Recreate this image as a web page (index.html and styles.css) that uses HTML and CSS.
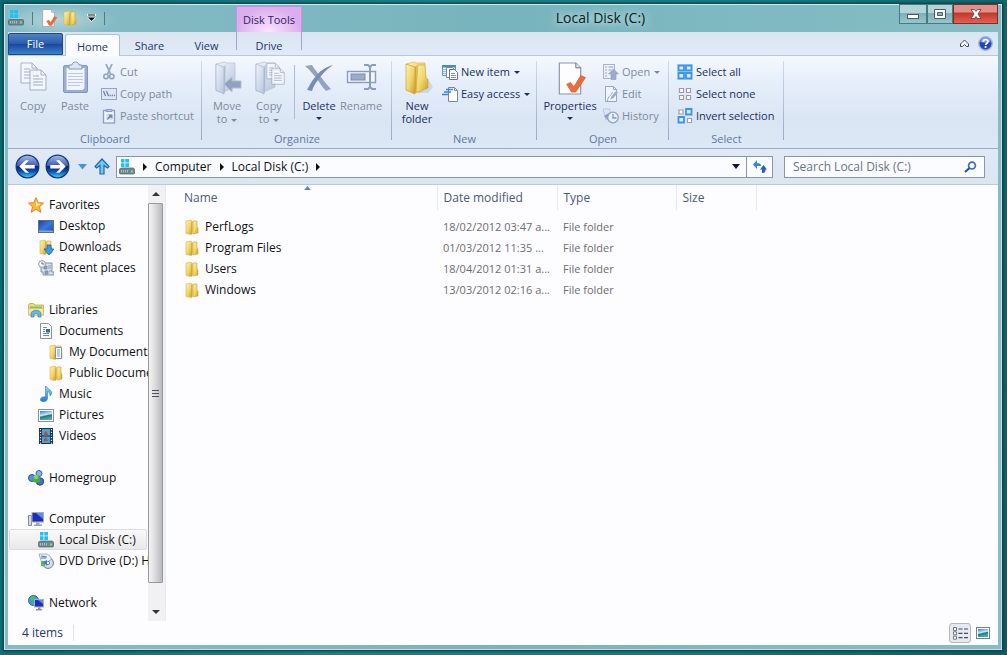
FILE: index.html
```html
<!DOCTYPE html>
<html lang="en">
<head>
<meta charset="utf-8">
<title>Local Disk (C:)</title>
<link rel="stylesheet" href="styles.css">
</head>
<body>
<svg class="defs" aria-hidden="true">
  <defs>
    <linearGradient id="gold" x1="0" y1="0" x2="1" y2="1"><stop offset="0" stop-color="#fdf3b4"/><stop offset=".55" stop-color="#efd467"/><stop offset="1" stop-color="#c99a2c"/></linearGradient>
    <linearGradient id="goldDark" x1="0" y1="0" x2="1" y2="0"><stop offset="0" stop-color="#c89c2e"/><stop offset="1" stop-color="#f4de83"/></linearGradient>
    <linearGradient id="mist" x1="0" y1="0" x2="1" y2="1"><stop offset="0" stop-color="#f3f6fc"/><stop offset="1" stop-color="#a9b7d2"/></linearGradient>
    <linearGradient id="mistDark" x1="0" y1="0" x2="1" y2="0"><stop offset="0" stop-color="#8495b6"/><stop offset="1" stop-color="#ccd6e8"/></linearGradient>
    <linearGradient id="screen" x1="0" y1="0" x2="1" y2="1"><stop offset="0" stop-color="#1c3f9c"/><stop offset=".5" stop-color="#3c78d8"/><stop offset="1" stop-color="#1b46a8"/></linearGradient>
    <linearGradient id="orb" x1="0" y1="0" x2="0" y2="1"><stop offset="0" stop-color="#a9bde6"/><stop offset=".46" stop-color="#3d5fb4"/><stop offset=".5" stop-color="#0c2276"/><stop offset=".72" stop-color="#0f4fb0"/><stop offset="1" stop-color="#35dcff"/></linearGradient>
    <linearGradient id="sky" x1="0" y1="0" x2="0" y2="1"><stop offset="0" stop-color="#8fe0fb"/><stop offset="1" stop-color="#1f78c8"/></linearGradient>
    <linearGradient id="photo" x1="0" y1="0" x2=".3" y2="1"><stop offset="0" stop-color="#2c7fc8"/><stop offset=".5" stop-color="#c4ecf7"/><stop offset=".65" stop-color="#1d7a86"/><stop offset="1" stop-color="#4fae9a"/></linearGradient>
    <symbol id="folder" viewBox="0 0 16 16"><path d="M2 2l5-1 1 1v13l-1 .5-5-1z" fill="url(#gold)" stroke="#d6b450" stroke-width=".6"/><path d="M7.500 3l1.500-1v12l-1.500 1.200z" fill="url(#goldDark)"/><path d="M9 2h4v6l1 1v5l-5 1z" fill="url(#gold)" stroke="#cfa63c" stroke-width=".6"/></symbol>
    <symbol id="disk" viewBox="0 0 16 16"><path d="M2 0h3.500v3.500H2zM6.300 0H10v3.500H6.300zM2 4.300h3.500V8H2zM6.300 4.300H10V8H6.300z" fill="#20c0f4"/><path d="M1 9.500L3 8h11l1.500 1.500z" fill="#b5c6cb"/><rect x=".5" y="9.500" width="15" height="5.500" rx="1" fill="#71868e" stroke="#4d6068" stroke-width=".7"/><path d="M2.500 11v2.500M4.500 11v2.500M6.500 11v2.500M8.500 11v2.500" stroke="#a9bcc2"/><rect x="12" y="11.500" width="2" height="2" fill="#7be46b"/></symbol>
    <symbol id="checkpage" viewBox="0 0 32 34"><path d="M5 1h17l5 5v27H5z" fill="#fdfdff" stroke="#8d94a6" stroke-width="1.200"/><path d="M22 1v5h5" fill="#e2e6ef" stroke="#6c7386"/><path d="M12.500 23l4-2 3.500 4.500L27 14l5 2-10 15h-4.500z" fill="#ea6d3c" stroke="#c8542b" stroke-width=".6"/></symbol>
    <symbol id="movefolder" viewBox="0 0 32 34"><path d="M4 3l9-2 1 1h9v24l-9 4H4z" fill="url(#mist)" stroke="#a0aec9" stroke-width=".7"/><path d="M4 3l8 3v27l-8-4z" fill="url(#mist)" stroke="#8d9dbf" stroke-width=".7"/><path d="M12 6l2-3v25l-2 5z" fill="url(#mistDark)"/></symbol>
    <symbol id="lines" viewBox="0 0 18 22"><path d="M1 1h11l5 5v15H1z" fill="#f8faff" stroke="#8999ba"/><path d="M12 1v5h5" fill="none" stroke="#8999ba"/><path d="M4 7h6M4 10h10M4 13h10M4 16h10" stroke="#8999ba"/></symbol>
  </defs>
</svg>
<main class="window">
  <header class="titlebar">
    <div class="quick">
      <svg class="ic16" viewBox="0 0 16 16"><use href="#disk"/></svg>
      <span class="quick-sep"></span>
      <button class="quick-btn" aria-label="Properties"><svg class="ic18"><use href="#checkpage"/></svg></button>
      <button class="quick-btn" aria-label="New folder"><svg class="ic16"><use href="#folder"/></svg></button>
      <button class="quick-more" aria-label="Customize"><svg width="9" height="8" viewBox="0 0 9 8"><path d="M0 0h9v2H0zM0 3.500h9L4.500 8z" fill="#fff"/><path d="M1 .5h7v1H1zM1 3.500h7l-3.500 3.500z" fill="#111"/></svg></button>
      <span class="quick-sep"></span>
    </div>
    <div class="context">Disk Tools</div>
    <h1 class="title">Local Disk (C:)</h1>
    <div class="controls">
      <button class="ctl min" aria-label="Minimize"><svg width="14" height="12"><rect x="1.500" y="6.500" width="11" height="4" fill="#fff" stroke="#4b5c66"/></svg></button>
      <button class="ctl max" aria-label="Maximize"><svg width="12" height="10"><path d="M.5.5h11v9H.5z" fill="#fff" stroke="#4b5c66"/><path d="M3.500 3.500h5v3h-5z" fill="#8ab8bf" stroke="#4b5c66"/></svg></button>
      <button class="ctl close" aria-label="Close"><svg width="12" height="12" viewBox="0 0 12 12"><path d="M1 1.500h3.500L6 3.500l1.500-2H11L8 6l3 4.500H7.500L6 8.500l-1.500 2H1L4 6z" fill="#fff" stroke="#6a3434" stroke-width=".8"/></svg></button>
    </div>
  </header>

  <nav class="tabs">
    <button class="tab file">File</button>
    <button class="tab home">Home</button>
    <button class="tab">Share</button>
    <button class="tab">View</button>
    <button class="tab drive">Drive</button>
    <span class="grow"></span>
    <button class="plain" aria-label="Collapse the ribbon"><svg width="11" height="9" viewBox="0 0 11 9"><path d="M5.500 1l4 4v2.500h-2l-2-2-2 2h-2V5z" fill="#fff" stroke="#3e4658"/></svg></button>
    <button class="plain" aria-label="Help"><svg width="15" height="15" viewBox="0 0 15 15"><circle cx="7.500" cy="7.500" r="6.700" fill="#2547b4" stroke="#a3b4dd" stroke-width="1.400"/><path d="M2.500 6a5 5 0 0 1 10 0c-3 1-7 1-10 0z" fill="#809ce4"/><path d="M5.200 5.800c0-3 4.800-3 4.800-.4 0 1.900-2.300 1.700-2.300 3.600" fill="none" stroke="#fff" stroke-width="1.700"/><circle cx="7.600" cy="11" r="1.100" fill="#fff"/></svg></button>
  </nav>

  <section class="ribbon">
    <div class="group clipboard">
      <div class="tools">
        <button class="big" disabled><svg class="ic34" viewBox="0 0 34 34"><svg x="4" y="1" width="18" height="22"><use href="#lines"/></svg><svg x="13" y="8" width="18" height="22"><use href="#lines"/></svg></svg>Copy</button>
        <button class="big" disabled><svg class="ic34" viewBox="0 0 34 34"><rect x="5.500" y="4.500" width="24" height="27" rx="1.500" fill="#92a2c6" stroke="#7487b1"/><path d="M8.500 7h18v20l-2 2h-16z" fill="#f3f6fd"/><path d="M10 12.500h15M10 15.500h15M10 18.500h15M10 21.500h15M10 24.500h12" stroke="#b7c2db"/><path d="M11 8V4h3c0-4 7-4 7 0h3v4z" fill="#dbe3f3" stroke="#7487b1"/></svg>Paste</button>
        <div class="stack">
          <button class="small" disabled><svg class="ic16" viewBox="0 0 16 16"><path d="M5 0l4.500 10M11 0L6.500 10" stroke="#8b9bbd" stroke-width="1.800"/><circle cx="5" cy="12.500" r="2.200" fill="none" stroke="#8192b8" stroke-width="1.500"/><circle cx="10.800" cy="12.500" r="2.200" fill="none" stroke="#8192b8" stroke-width="1.500"/></svg>Cut</button>
          <button class="small" disabled><svg class="ic16" viewBox="0 0 16 16"><rect x=".5" y="2.500" width="15" height="11" fill="#dfe7f6" stroke="#8999bd"/><path d="M2.500 5l2 5M5.500 5l2 5" stroke="#576b99" stroke-width="1.200"/><path d="M8.500 9.500h1.200M10.700 9.500h1.200M12.900 9.500h1.200" stroke="#576b99" stroke-width="1.300"/></svg>Copy path</button>
          <button class="small" disabled><svg class="ic16" viewBox="0 0 16 16"><rect x="2.500" y="2.500" width="11" height="12.500" fill="#f2f5fc" stroke="#8192b8" stroke-width="1.300"/><path d="M5 3.500V1.500h6v2z" fill="#b4c0da" stroke="#8192b8"/><path d="M5 6h6v6H5z" fill="#dbe3f3"/><path d="M6 12c0-2 .8-3 2.500-4L7 6.500h4.500V11L10 9.500C8.500 10 7.500 11 6 12z" fill="#6378a8"/></svg>Paste shortcut</button>
        </div>
      </div>
      <h2>Clipboard</h2>
    </div>
    <div class="group organize">
      <div class="tools">
        <button class="big" disabled><svg class="ic34" viewBox="0 0 34 34"><svg x="2" width="32" height="34"><use href="#movefolder"/></svg><path d="M14 23l8-7v4h9v7h-9v4z" fill="#8395b8" stroke="#a9b6d0"/></svg>Move<br>to <i class="caret"></i></button>
        <button class="big" disabled><svg class="ic34" viewBox="0 0 34 34"><svg width="32" height="34"><use href="#movefolder"/></svg><svg x="14" y="1" width="14" height="18"><use href="#lines"/></svg><svg x="19" y="6" width="14" height="19"><use href="#lines"/></svg></svg>Copy<br>to <i class="caret"></i></button>
        <span class="tool-sep"></span>
        <button class="big"><svg class="ic34" viewBox="0 0 34 34"><path d="M3 5l7-1c3 5 6 8 9 12 3 4 7 9 10 12l-5 2c-4-4-6-8-9-12C11 13 8 9 3 5z" fill="#92a2c0"/><path d="M31 4c-6 4-11 9-15 15-3 4-5 7-6 11l-5-1c3-6 6-11 10-15 4-5 9-8 16-10z" fill="#7a8cb0"/></svg>Delete<i class="caret below"></i></button>
        <button class="big" disabled><svg class="ic34" viewBox="0 0 34 34"><rect x="3.500" y="10.500" width="28" height="11" fill="#f2f5fc" stroke="#7b8db4" stroke-width="1.400"/><rect x="7" y="13" width="14" height="6" fill="#8fa0c2" stroke="#6a7da8"/><path d="M20 4h4l2 2 2-2h4M20 28h4l2-2 2 2h4M26 5.500v21" fill="none" stroke="#7b8db4" stroke-width="2"/></svg>Rename</button>
      </div>
      <h2>Organize</h2>
    </div>
    <div class="group new">
      <div class="tools">
        <button class="big"><svg class="ic34" viewBox="0 0 34 34"><path d="M28 18l5 8-5 6H14z" fill="#b9bfcd" opacity=".5"/><path d="M6 3l8-2 2 1h9v24l-8 5z" fill="url(#gold)" stroke="#dbb84e" stroke-width=".7"/><path d="M6 3l9 3v27l-9-4z" fill="url(#gold)" stroke="#caa13a" stroke-width=".7"/><path d="M15 6l3-3v24l-3 6z" fill="url(#goldDark)"/><path d="M18 4h7l1 13 2 1v9l-9 4h-3z" fill="url(#gold)" stroke="#caa13a" stroke-width=".6"/></svg>New<br>folder</button>
        <div class="stack">
          <button class="small"><svg class="ic16" viewBox="0 0 16 16"><path d="M.5 1.500h13v10H.5z" fill="#e8f3fd" stroke="#5b9bd0"/><path d="M0 1h14v2.500H0z" fill="#3f8ed0"/><path d="M2 5v5M4 5v5" stroke="#438acb" stroke-dasharray="1 1"/><path d="M4.500 3.500h6l2 2v8h-8z" fill="#fff" stroke="#7b8799"/><path d="M7.500 5.500h5l3 3v7h-8z" fill="#fff" stroke="#6c798f"/><path d="M9 9.500h4M9 11.500h5M9 13.500h5" stroke="#7e95b8"/></svg>New item <i class="caret"></i></button>
          <button class="small"><svg class="ic16" viewBox="0 0 16 16"><path d="M6.500 1.500h6l3 3v11h-9z" fill="#fff" stroke="#7b8799"/><path d="M12.500 1.500v3h3" fill="none" stroke="#7b8799"/><path d="M4 3.500h7M2 6h7M0 8.500h6" stroke="#3b83cf" stroke-width="1.500"/></svg>Easy access <i class="caret"></i></button>
        </div>
      </div>
      <h2>New</h2>
    </div>
    <div class="group open">
      <div class="tools">
        <button class="big wide"><svg class="ic34" viewBox="0 0 34 34"><use href="#checkpage" width="34" height="33" y="1"/></svg>Properties<i class="caret below"></i></button>
        <div class="stack">
          <button class="small" disabled><svg class="ic16" viewBox="0 0 16 16"><rect x=".5" y=".5" width="11" height="14" fill="#eef2fa" stroke="#9aa9c7"/><path d="M2 3h2M2 6h2M2 9h2M2 12h2M5.500 3h5M5.500 6h3" stroke="#8596ba" stroke-width="1.200"/><path d="M10.500 5l5 5H13v5.500H8V10H5.500z" fill="#8f9fbf" stroke="#7d8fb3" stroke-width=".6"/></svg>Open <i class="caret"></i></button>
          <button class="small" disabled><svg class="ic16" viewBox="0 0 16 16"><path d="M2.500.5h8l3 3v12h-11z" fill="#f5f8fd" stroke="#8a9abc"/><path d="M10.500.5v3h3M4.500 15c0-5 4-5 5-9" fill="none" stroke="#8a9abc"/><path d="M8 11l5-6 2 1.500-5 6-2.500.5z" fill="#8fa0c2"/></svg>Edit</button>
          <button class="small" disabled><svg class="ic16" viewBox="0 0 16 16"><path d="M0 1h7v7l-4 4z" fill="#dde5f2" stroke="#a7b4ce" stroke-width=".7"/><path d="M1 8l5-3v8z" fill="#7e90b6"/><circle cx="10" cy="9.500" r="5.300" fill="#edf2fb" stroke="#8797ba" stroke-width="1.300"/><path d="M10 6v4h3.500" fill="none" stroke="#7286af" stroke-width="1.300"/></svg>History</button>
        </div>
      </div>
      <h2>Open</h2>
    </div>
    <div class="group select">
      <div class="tools">
        <div class="stack">
          <button class="small"><svg class="ic16" viewBox="0 0 16 16"><path d="M0 0h16v16H0z" fill="#cce6fd"/><path d="M1.500 1.500H7v5H1.500zM9 1.500h5.500v5H9zM1.500 9H7v5.500H1.500zM9 9h5.500v5.500H9z" fill="#d3eafd" stroke="#3b95e6" stroke-width="1.800"/></svg>Select all</button>
          <button class="small"><svg class="ic16" viewBox="0 0 16 16"><path d="M2.500 2.500h4v4h-4zM9.500 2.500h4v4h-4zM2.500 9.500h4v4h-4zM9.500 9.500h4v4h-4z" fill="#fff" stroke="#9a9ea8" stroke-width="1.200"/></svg>Select none</button>
          <button class="small"><svg class="ic16" viewBox="0 0 16 16"><path d="M2 2h4v4H2zM10.500 10.500h4v4h-4z" fill="#fff" stroke="#9a9ea8" stroke-width="1.200"/><path d="M9 1h5.500v5.500H9zM1.500 9H7v5.500H1.500z" fill="#d3eafd" stroke="#3b95e6" stroke-width="1.800"/></svg>Invert selection</button>
        </div>
      </div>
      <h2>Select</h2>
    </div>
  </section>

  <section class="navbar">
    <button class="plain" aria-label="Back"><svg class="orb" viewBox="0 0 26 26"><circle cx="13" cy="13" r="11.800" fill="url(#orb)" stroke="#16347e" stroke-width="1.300"/><path d="M4.500 13l6.500-6.500h3.500l-4.500 5h10.500v3.500H10l4.500 4.500H11z" fill="#fff"/></svg></button>
    <button class="plain" aria-label="Forward"><svg class="orb" viewBox="0 0 26 26"><circle cx="13" cy="13" r="11.800" fill="url(#orb)" stroke="#16347e" stroke-width="1.300"/><path d="M21.500 13L15 6.500h-3.500l4.500 5H5.500V15H16l-4.500 4.500H15z" fill="#fff"/></svg></button>
    <button class="plain recent" aria-label="Recent locations"><svg width="9" height="6"><path d="M0 0h9L4.500 5.500z" fill="#4a96c8"/></svg></button>
    <button class="plain" aria-label="Up"><svg width="16" height="17" viewBox="0 0 16 17"><path d="M8 1l7 7.500-1.500 1.500L10 7.500V16H6V7.500L2.500 10 1 8.500z" fill="#69cdf8" stroke="#2a62ac" stroke-width="1.200"/></svg></button>
    <div class="address">
      <svg class="ic16"><use href="#disk"/></svg>
      <i class="arrow"></i><a href="#computer">Computer</a>
      <i class="arrow"></i><a href="#disk-c">Local Disk (C:)</a>
      <i class="arrow"></i>
      <span class="grow"></span>
      <button class="plain drop" aria-label="Previous locations"><svg width="8" height="6"><path d="M0 0h8L4 5z" fill="#14143c"/></svg></button>
      <button class="refresh" aria-label="Refresh"><svg width="14" height="14" viewBox="0 0 14 14"><path d="M0 4.500L4 0v3c3 0 4 1 4 3H4v3z" fill="#3b86cf"/><path d="M14 9.500L10.500 5 7 9.500h2V13c3 0 3.500-1 3.500-3.500z" fill="#2c62b0"/></svg></button>
    </div>
    <div class="search">
      <input type="search" aria-label="Search" placeholder="Search Local Disk (C:)">
      <svg width="13" height="12" viewBox="0 0 13 12"><circle cx="8" cy="4.500" r="3.400" fill="#f4faff" stroke="#3a72bd" stroke-width="1.700"/><path d="M5.500 7L1 11" stroke="#23579f" stroke-width="2.200"/></svg>
    </div>
  </section>

  <section class="content">
    <nav class="tree">
      <ul>
        <li><a href="#fav"><svg class="ic16" viewBox="0 0 16 16"><path d="M8 .7l2.200 5 5.300.4-4 3.700 1.300 5.500L8 12.300l-4.800 3 1.300-5.500-4-3.700 5.300-.4z" fill="#fbb938" stroke="#e2812a"/><path d="M8 3l1.500 3.600 3 .4L8 9.500z" fill="#fff0a0"/></svg>Favorites</a>
          <ul>
            <li><a href="#desk"><svg class="ic16" viewBox="0 0 16 16"><rect x=".5" y="2.500" width="15" height="12" fill="url(#screen)" stroke="#5a6c92"/><path d="M1 12.500h14V14H1z" fill="#8ea6d2"/></svg>Desktop</a></li>
            <li><a href="#down"><svg class="ic16" viewBox="0 0 16 16"><use href="#folder" width="16" height="16"/><path d="M9 6h4v4h3l-5 6-5-6h3z" fill="#36a0ea" stroke="#1c62b0" stroke-width=".8"/></svg>Downloads</a></li>
            <li><a href="#recent"><svg class="ic16" viewBox="0 0 16 16"><path d="M3 3h11v9h2v3H5v-3H3z" fill="#d6dee8" stroke="#8592a4"/><path d="M6 6h3v3H6zM10 6h3M10 8h3M7 11h3v3H7zM11 11h3" fill="#8ca4c4" stroke="#6d83a3" stroke-width=".7"/><circle cx="4" cy="4" r="3.400" fill="#f6f8fb" stroke="#8f98a6"/><path d="M4 2v2h2" fill="none" stroke="#5d6c82"/></svg>Recent places</a></li>
          </ul></li>
        <li><a href="#lib"><svg class="ic16" viewBox="0 0 16 16"><path d="M.5 3l1-1.500h4L7 3h8.500v10H.5z" fill="#f2d978" stroke="#c9a33e" stroke-width=".8"/><path d="M2 4.500h12v2H2z" fill="#7cc26b"/><path d="M.5 6.500h15V13H.5z" fill="#f8e79f" stroke="#d8b955" stroke-width=".6"/><path d="M3 15v-3c0-5 10-5 10 0v3h-3v-2c0-2-4-2-4 0v2z" fill="#62b8ec" stroke="#3683bf" stroke-width=".7"/></svg>Libraries</a>
          <ul>
            <li><a href="#docs"><svg class="ic16" viewBox="0 0 16 16"><path d="M2.500.5h8l3 3v12h-11z" fill="#fcfdff" stroke="#8792a5"/><path d="M5 4.500h4M5 6.500h2M5 8.500h2M5 10.500h6M5 12.500h6" stroke="#7389ad"/><path d="M8 6h4v3.500H8z" fill="#2e66b4"/></svg>Documents</a>
              <ul>
                <li><a href="#mydocs"><svg class="ic16" viewBox="0 0 16 16"><use href="#folder" width="16" height="16"/><path d="M7.500 3.500h6v11h-6z" fill="#fff" stroke="#8090a8"/><path d="M9 6h3M9 8h3M9 10h3M9 12h3" stroke="#7995bd"/></svg>My Documents</a></li>
                <li><a href="#pubdocs"><svg class="ic16"><use href="#folder"/></svg>Public Documents</a></li>
              </ul></li>
            <li><a href="#music"><svg class="ic16" viewBox="0 0 16 16"><path d="M8 0c1 3 6 3.500 5.500 7.500-.3 1.500-1 2-1.500 2.500.3-3-1.200-4-2.500-4.500V12c0 5-8 4.500-7 1 .6-2 3-2.500 5-2V0z" fill="url(#sky)" stroke="#2b7fc2" stroke-width=".6"/></svg>Music</a></li>
            <li><a href="#pics"><svg class="ic16" viewBox="0 0 16 16"><rect x=".5" y="2.500" width="15" height="12" fill="#fff" stroke="#87919c"/><rect x="2" y="4" width="12" height="9" fill="url(#photo)"/></svg>Pictures</a></li>
            <li><a href="#vids"><svg class="ic16" viewBox="0 0 16 16"><path d="M1 0h14v16H1z" fill="#23303e"/><path d="M4 1h8v6.500H4zM4 8.500h8V15H4z" fill="#4aa0dc"/><path d="M6 5l2-2 2 3v1.500H6zM6 11l2-2 2 4H6z" fill="#a4593e"/><path d="M2.500 1v15M13.500 1v15" stroke="#e8edf2" stroke-width="1.200" stroke-dasharray="1.200 1.500"/></svg>Videos</a></li>
          </ul></li>
        <li><a href="#home"><svg class="ic16" viewBox="0 0 16 16"><circle cx="11" cy="3.500" r="3" fill="#82b5ea" stroke="#3d63ae"/><circle cx="4" cy="8" r="3.500" fill="#5790d8" stroke="#2a4f9e"/><circle cx="12" cy="11.500" r="3.700" fill="#4a6fca" stroke="#2a3f94"/><path d="M4 11c2-5 6-7 8-2 1 4-3 5-8 2z" fill="#46aa3c"/><circle cx="8" cy="7" r="2.200" fill="#86d469"/></svg>Homegroup</a></li>
        <li><a href="#computer"><svg class="ic16" viewBox="0 0 16 16"><path d="M.5 4.500h3v10h-3z" fill="#d4d8dd" stroke="#858c96"/><rect x="4" y="1.500" width="11.500" height="9.500" fill="#1c2fba" stroke="#a7afbc"/><path d="M8 2h7v6z" fill="#6687f0"/><path d="M8 11.500h3.500v2H14V15H6v-1.500h2z" fill="#9da5b2"/></svg>Computer</a>
          <ul>
            <li><a class="current" href="#disk-c"><svg class="ic16"><use href="#disk"/></svg>Local Disk (C:)</a></li>
            <li><a href="#disk-d"><svg class="ic16" viewBox="0 0 16 16"><circle cx="10" cy="10" r="5.400" fill="#d4dfef" stroke="#66789b"/><circle cx="10" cy="10" r="1.700" fill="#fff" stroke="#7a8cad"/><path d="M1 1h8l4 3v3L4 11z" fill="#eef2f7" stroke="#8794a8" stroke-width=".7"/><path d="M3 3l6 1M3 5h5" stroke="#4a77be"/><path d="M3 8h4v5H3z" fill="#5bba49"/><path d="M5 9l4-2v6z" fill="#3b7fcb"/></svg>DVD Drive (D:) HRM_</a></li>
          </ul></li>
        <li><a href="#net"><svg class="ic16" viewBox="0 0 16 16"><circle cx="5.500" cy="5.500" r="5" fill="#38a0dc" stroke="#246aa8"/><path d="M2 3c2-2 4-2 5-1L6 5 3 6zM4 7l3 1-2 2z" fill="#54bb55"/><rect x="6.500" y="4.500" width="9" height="7.500" fill="#1c2fba" stroke="#a7afbc"/><path d="M10 5h5v4z" fill="#6687f0"/><path d="M10 12.500h2.500V14H14v1.500H8V14h2z" fill="#8993a5"/></svg>Network</a></li>
      </ul>
    </nav>
    <div class="scroll">
      <button class="scroll-btn" aria-label="Scroll up"><svg width="8" height="5"><path d="M4 0l4 4H0z" fill="#333"/></svg></button>
      <div class="thumb"><i></i><i></i><i></i></div>
      <button class="scroll-btn" aria-label="Scroll down"><svg width="8" height="5"><path d="M4 4l4-4H0z" fill="#333"/></svg></button>
    </div>
    <div class="files">
      <table>
        <thead><tr><th class="c-name">Name<svg class="sort" width="7" height="4"><path d="M3.500 0L7 4H0z" fill="#5c8aae"/></svg></th><th class="c-date">Date modified</th><th class="c-type">Type</th><th class="c-size">Size</th></tr></thead>
        <tbody>
          <tr><td><svg class="ic16"><use href="#folder"/></svg>PerfLogs</td><td>18/02/2012 03:47 a...</td><td>File folder</td><td></td></tr>
          <tr><td><svg class="ic16"><use href="#folder"/></svg>Program Files</td><td>01/03/2012 11:35 ...</td><td>File folder</td><td></td></tr>
          <tr><td><svg class="ic16"><use href="#folder"/></svg>Users</td><td>18/04/2012 01:31 a...</td><td>File folder</td><td></td></tr>
          <tr><td><svg class="ic16"><use href="#folder"/></svg>Windows</td><td>13/03/2012 02:16 a...</td><td>File folder</td><td></td></tr>
        </tbody>
      </table>
    </div>
  </section>

  <footer class="status">
    <span class="count">4 items</span>
    <span class="grow"></span>
    <button class="view on" aria-label="Details"><svg width="15" height="13" viewBox="0 0 15 13"><path d="M.5.5h3v3h-3zM.5 4.800h3v3h-3zM.5 9.200h3v3h-3z" fill="#fff" stroke="#6e7788"/><path d="M5.500 2h4M11 2h4M5.500 6.300h4M11 6.300h4M5.500 10.700h4M11 10.700h4" stroke="#414c66" stroke-width="1.200"/></svg></button>
    <button class="view" aria-label="Large icons"><svg width="14" height="12" viewBox="0 0 14 12"><rect x=".5" y=".5" width="13" height="11" fill="#fff" stroke="#74808e"/><rect x="2" y="2" width="10" height="8" fill="url(#photo)"/></svg></button>
  </footer>
</main>
</body>
</html>
```
FILE: styles.css
```css
* { box-sizing: border-box; }
body {
  margin: 0;
  height: 100vh;
  padding: 3px 4px 4px 3px;
  display: flex;
  background: linear-gradient(100deg, #0d6b73, #1f8189 40%, #177b82 70%, #0c5f66);
  font-family: "Open Sans", "Noto Sans", sans-serif;
  font-size: 12px;
  line-height: 16px;
  color: #111;
}
button { margin: 0; padding: 0; border: 0; background: none; font: inherit; color: inherit; }
ul { list-style: none; margin: 0; padding: 0; }
a { color: inherit; text-decoration: none; }
svg { display: block; flex: none; }
.defs { position: absolute; width: 0; height: 0; }
.ic16 { width: 16px; height: 16px; }
.ic18 { width: 17px; height: 18px; }
.ic34 { width: 34px; height: 34px; }
.grow { flex: 1; }
.plain { display: flex; align-items: center; justify-content: center; }

.window {
  flex: 1;
  min-width: 0;
  display: flex;
  flex-direction: column;
  padding: 0 4px 5px 3px;
  border: 1px solid #17474d;
  box-shadow: inset 1px 1px 0 #d4e9ec, inset -1px -1px 0 #c2dee2, 0 0 3px #053c42;
  background: linear-gradient(90deg, #86bbc6, #78b4bd 50%, #86bdc4);
}

.titlebar { height: 28px; display: flex; flex: none; padding-left: 1px; }
.quick { width: 228px; display: flex; align-items: center; gap: 8px; background: radial-gradient(ellipse 60px 16px at 50px 16px, #b4d4d8, transparent); }
.quick-sep { width: 1px; height: 13px; background: #4f7d87; }
.quick-btn { width: 14px; height: 20px; display: flex; align-items: center; justify-content: center; }
.quick-more { padding-left: 2px; }
.context {
  width: 66px; margin-top: 2px; text-align: center; font-size: 11px; line-height: 26px;
  border: 1px solid #c795df; border-bottom: 0; color: #2a2560; white-space: nowrap;
  background: radial-gradient(ellipse at 50% 100%, #fbe4fc, #dcaef0 70%);
}
.title {
  flex: 1; margin: 0; text-align: center; font-size: 14px; font-weight: 400; line-height: 27px; color: #0c1a1e;
  text-shadow: 0 0 6px #c9e6ea, 0 0 10px #c9e6ea;
}
.controls { display: flex; align-items: flex-start; }
.ctl { height: 20px; display: flex; align-items: center; justify-content: center; border: 1px solid #e3f1f3; border-top: 0; outline: 1px solid #477980; outline-offset: -1px; background: linear-gradient(#b3d3d7 45%, #7db0b7 50%, #97c5ca); }
.min { width: 28px; }
.max { width: 26px; }
.close { width: 45px; background: linear-gradient(#e09088 40%, #c4382c 50%, #df6355); outline-color: #7d2d2b; }

.tabs { flex: none; height: 24px; display: flex; align-items: flex-end; gap: 2px; padding: 0 5px 0 0; margin-left: 1px; background: linear-gradient(#dae4f0, #e2eafa); border-bottom: 1px solid #b9c8dd; color: #243863; font-size: 11px; }
.tab { width: 55px; height: 22px; padding-top: 3px; }
.file { height: 22px; padding: 0; color: #fff; border: 1px solid #1c468f; border-radius: 2px 2px 0 0; background: linear-gradient(#4f82c6, #2b5cae 48%, #18459a 50%, #3a82cc); }
.home { padding: 2px 0 0; margin-bottom: -1px; border: 1px solid #b0bfd8; border-bottom: 0; border-radius: 3px 3px 0 0; background: #fafcff; }
.drive { width: 66px; height: 23px; padding-top: 4px; border: solid #aab2cc; border-width: 0 1px; border-image: linear-gradient(#a7a3c9 75%, transparent 75%) 1; }
.tabs .plain { height: 24px; margin-left: 6px; }

.ribbon { flex: none; display: flex; margin-left: 1px; padding: 4px 0 0; background: linear-gradient(#f5f9ff, #e5eefa 30%, #dae5f4 70%, #dde8f6); border-bottom: 1px solid #94abcc; color: #1d2f5d; font-size: 11px; }
.group { height: 88px; display: flex; flex-direction: column; padding: 1px 4px 0; position: relative; }
.group::after { content: ""; width: 1px; position: absolute; right: 0; top: 1px; bottom: 8px; background: linear-gradient(#d0daea, #99abc8); }
.clipboard { width: 194px; }
.organize { width: 190px; }
.new { width: 145px; }
.open { width: 132px; }
.select { width: 115px; }
.group h2 { margin: 0; font-size: 11px; font-weight: 400; text-align: center; color: #63779d; line-height: 18px; }
.tools { flex: 1; display: flex; }
.big { flex: none; width: 42px; line-height: 13px; text-align: center; white-space: nowrap; align-self: flex-start; }
.big .ic34 { margin: 0 auto 4px; }
.big.wide { width: 58px; }
.stack { margin-left: 4px; }
.clipboard .stack { margin-left: 5px; }
.small { height: 22px; display: flex; align-items: center; gap: 3px; white-space: nowrap; }
.ribbon button:disabled { color: #7f899d; }
.ribbon button:disabled svg { opacity: .85; }
.tool-sep { width: 1px; height: 54px; margin: 4px 3px 0 4px; background: #adbcd3; }
.caret { display: inline-block; vertical-align: middle; border: 3px solid transparent; border-top-color: currentColor; border-bottom: 0; margin-left: 1px; }
.caret.below { display: block; width: 6px; margin: 5px auto 0; }

.navbar { flex: none; height: 36px; display: flex; align-items: center; margin-left: 1px; padding: 0 13px 0 7px; gap: 5px; background: linear-gradient(#e1e9f5, #dae6f2); border-bottom: 1px solid #b8cbdc; }
.orb { width: 25px; height: 25px; }
.recent { width: 14px; }
.address { flex: 1; height: 22px; margin-left: 1px; padding-left: 2px; display: flex; align-items: center; gap: 8px; border: 1px solid #8998a8; background: #fafcff; color: #111; }
.arrow { border: 4px solid transparent; border-left: 4px solid #111; border-right: 0; }
.refresh { width: 26px; height: 20px; display: flex; align-items: center; justify-content: center; border-left: 1px solid #8998a8; }
.drop { width: 12px; margin-right: -4px; }
.search { width: 201px; height: 22px; margin-left: 6px; padding: 0 7px 0 8px; display: flex; align-items: center; border: 1px solid #8998a8; background: #fafcff; }
.search input { flex: 1; min-width: 0; padding: 0; border: 0; background: none; font: inherit; outline: 0; }
.search input::placeholder { color: #6d7580; opacity: 1; }

.content { flex: 1; min-height: 0; display: flex; margin-left: 1px; background: #fdfdff; }
.tree { width: 140px; overflow: hidden; padding-top: 9px; }
.tree a { height: 21px; display: flex; align-items: center; gap: 5px; padding-left: 20px; white-space: nowrap; }
.tree ul ul a { padding-left: 30px; }
.tree ul ul ul a { padding-left: 40px; }
.tree > ul > li { margin-bottom: 21px; }
.tree > ul > li:nth-child(3) { margin-bottom: 20px; }
.tree ul ul a.current { margin: 0 1px; padding-left: 28px; border: 1px solid #dcdcde; border-radius: 2px; background: linear-gradient(#fafafa, #e8e8ea); }
.scroll { width: 18px; display: flex; flex-direction: column; background: #f1f1f3; border-right: 1px solid #e6ebf2; }
.scroll-btn { height: 18px; display: flex; align-items: center; justify-content: center; width: 16px; }
.thumb { flex: 1; margin-bottom: 20px; width: 15px; border: 1px solid #96989c; border-radius: 1px; background: linear-gradient(90deg, #f4f4f5, #dcdcde 45%, #b9babd); display: flex; flex-direction: column; align-items: center; justify-content: center; gap: 2px; }
.thumb i { width: 7px; height: 1px; background: #4f5257; }
.files { flex: 1; }
table { border-collapse: collapse; table-layout: fixed; width: 590px; }
th, td { padding: 0 0 0 6px; text-align: left; font-weight: 400; white-space: nowrap; overflow: hidden; }
th { height: 25px; padding-top: 1px; border-right: 1px solid #e2e9f2; color: #4a5a7c; position: relative; }
td { height: 21px; color: #6d6d72; font-size: 11px; }
tbody::before { content: ""; display: block; height: 6px; }
.c-name { width: 271px; padding-left: 18px; }
.c-date { width: 120px; }
.c-type { width: 119px; }
.c-size { width: 80px; }
td:first-child { display: flex; align-items: center; gap: 5px; padding-left: 18px; color: #111; font-size: 12px; }
.sort { position: absolute; left: 51%; top: 1px; }

.status { flex: none; height: 24px; display: flex; align-items: center; margin-left: 1px; padding: 0 5px 0 14px; gap: 2px; background: #fdfdff; color: #27395f; }
.count { padding-right: 10px; border-right: 1px solid #e0e4ea; }
.view { width: 20px; height: 20px; display: flex; align-items: center; justify-content: center; }
.view.on { width: 22px; border: 1px solid #b3b8c2; border-radius: 3px; background: #e7e9ee; }
```
